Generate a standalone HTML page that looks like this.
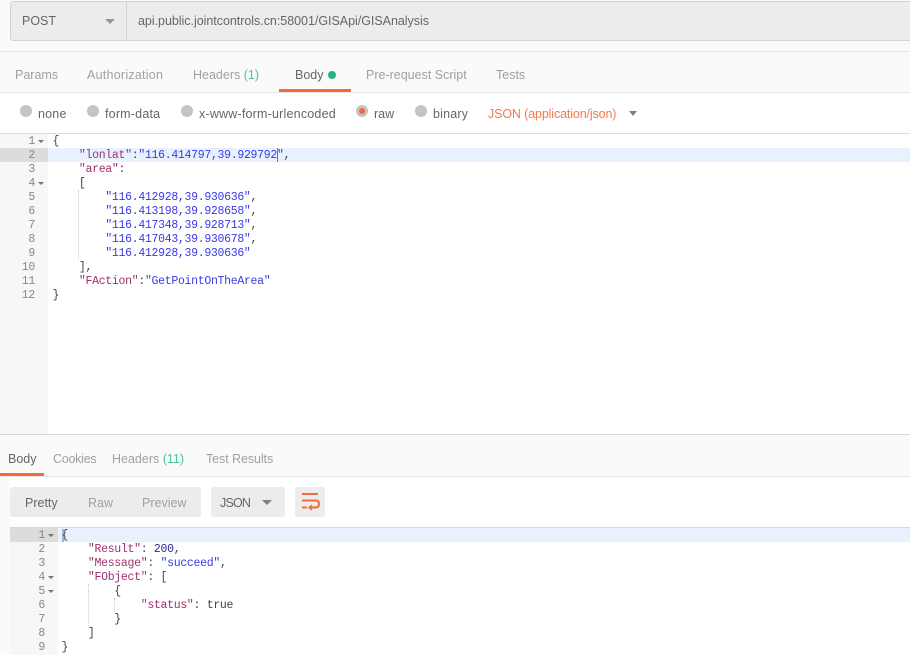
<!DOCTYPE html>
<html><head><meta charset="utf-8"><style>
html,body{margin:0;padding:0;background:#fff}
#p{position:relative;width:910px;height:655px;overflow:hidden;background:#fff;font-family:"Liberation Sans",sans-serif;font-size:12.5px;color:#a0a0a0}
.a{position:absolute}
.t{position:absolute;white-space:nowrap;line-height:16px}
.d{color:#666}.g{color:#4cc39a}
.r{position:absolute;width:12px;height:12px;border-radius:50%;background:#c4c4c4}
.c{position:absolute;white-space:pre;font-family:"Liberation Mono",monospace;font-size:11.5px;letter-spacing:-.3px;line-height:14px;color:#444}
.n{position:absolute;font-family:"Liberation Mono",monospace;font-size:11.5px;letter-spacing:-.3px;line-height:14px;color:#888;text-align:right;white-space:pre}
.k{color:#a0306f}.s{color:#3a3ae6}.b{color:#2a2a9c}
.ar{position:absolute;width:0;height:0;border-left:5px solid transparent;border-right:5px solid transparent;border-top:5px solid #808080}
.fa{position:absolute;width:0;height:0;border-left:3px solid transparent;border-right:3px solid transparent;border-top:3px solid #777}
.gd{position:absolute;width:0;border-left:1px dotted #ccc}
</style></head><body><div id="p">
<div class="a" style="left:0;top:0;width:910px;height:133px;background:#fafafa"></div>
<div class="a" style="left:10px;top:1px;width:900px;height:38px;background:#ececec;border:1px solid #d4d4d4;border-right:0;border-radius:3px 0 0 3px"></div>
<div class="a" style="left:126px;top:2px;width:1px;height:38px;background:#d4d4d4"></div>
<div class="t d" style="left:22px;top:13px;font-size:12.5px">POST</div>
<div class="ar" style="left:105px;top:19px;border-top-color:#999"></div>
<div class="t" style="left:138px;top:13px;color:#666;font-size:12.5px;letter-spacing:-.03px">api.public.jointcontrols.cn:58001/GISApi/GISAnalysis</div>
<div class="a" style="left:0;top:51px;width:910px;height:1px;background:#e8e8e8"></div>
<div class="a" style="left:0;top:92px;width:910px;height:1px;background:#e6e6e6"></div>
<div class="a" style="left:0;top:93px;width:910px;height:40px;background:#fff"></div>
<div class="t" style="left:15px;top:67px">Params</div>
<div class="t" style="left:87px;top:67px;letter-spacing:.25px">Authorization</div>
<div class="t" style="left:193px;top:67px">Headers <span class="g">(1)</span></div>
<div class="t d" style="left:295px;top:67px">Body</div>
<div class="a" style="left:328px;top:71px;width:8px;height:8px;border-radius:50%;background:#26b47f"></div>
<div class="a" style="left:279px;top:89px;width:72px;height:3px;background:#f26b3a"></div>
<div class="t" style="left:366px;top:67px">Pre-request Script</div>
<div class="t" style="left:496px;top:67px">Tests</div>
<div class="r" style="left:20px;top:105px"></div><div class="t d" style="left:38px;top:106px;letter-spacing:.2px">none</div>
<div class="r" style="left:87px;top:105px"></div><div class="t d" style="left:105px;top:106px;letter-spacing:.2px">form-data</div>
<div class="r" style="left:181px;top:105px"></div><div class="t d" style="left:199px;top:106px;letter-spacing:.2px">x-www-form-urlencoded</div>
<div class="r" style="left:356px;top:105px"></div><div class="a" style="left:359px;top:108px;width:6px;height:6px;border-radius:50%;background:#f26b3a"></div><div class="t d" style="left:374px;top:106px">raw</div>
<div class="r" style="left:415px;top:105px"></div><div class="t d" style="left:433px;top:106px;letter-spacing:.2px">binary</div>
<div class="t" style="left:488px;top:106px;color:#f4794a;letter-spacing:-.13px">JSON (application/json)</div>
<div class="ar" style="left:629px;top:111px;border-left-width:4.5px;border-right-width:4.5px"></div>

<div class="a" style="left:0;top:133px;width:910px;height:1px;background:#dcdcdc"></div>
<div class="a" style="left:0;top:134px;width:48px;height:300px;background:#f7f7f7"></div>
<div class="a" style="left:48px;top:148px;width:862px;height:14px;background:#e8f2ff"></div>
<div class="a" style="left:0;top:148px;width:48px;height:14px;background:#dcdcdc"></div>
<div class="n" style="left:0;top:135px;width:35px">1
2
3
4
5
6
7
8
9
10
11
12</div>
<div class="fa" style="left:38px;top:140px"></div><div class="fa" style="left:38px;top:182px"></div>
<div class="gd" style="left:78px;top:190px;height:70px"></div>
<div class="c" style="left:52.5px;top:135px">{
    <span class="k">"lonlat"</span>:<span class="s">"116.414797,39.929792"</span>,
    <span class="k">"area"</span>:
    [
        <span class="s">"116.412928,39.930636"</span>,
        <span class="s">"116.413198,39.928658"</span>,
        <span class="s">"116.417348,39.928713"</span>,
        <span class="s">"116.417043,39.930678"</span>,
        <span class="s">"116.412928,39.930636"</span>
    ],
    <span class="k">"FAction"</span>:<span class="s">"GetPointOnTheArea"</span>
}</div>
<div class="a" style="left:277px;top:148px;width:1px;height:14px;background:#777"></div>

<div class="a" style="left:0;top:434px;width:910px;height:1px;background:#d8d8d8"></div>
<div class="a" style="left:0;top:435px;width:910px;height:41px;background:#fafafa"></div>
<div class="a" style="left:0;top:476px;width:910px;height:1px;background:#e6e6e6"></div>
<div class="a" style="left:0;top:477px;width:10px;height:178px;background:#fafafa"></div>
<div class="t d" style="left:8px;top:451px">Body</div>
<div class="a" style="left:0;top:473px;width:44px;height:3px;background:#f26b3a"></div>
<div class="t" style="left:53px;top:451px;letter-spacing:-.25px">Cookies</div>
<div class="t" style="left:112px;top:451px">Headers <span class="g">(11)</span></div>
<div class="t" style="left:206px;top:451px;letter-spacing:-.08px">Test Results</div>
<div class="a" style="left:10px;top:487px;width:191px;height:30px;background:#ececec;border-radius:3px"></div>
<div class="t d" style="left:25px;top:495px">Pretty</div>
<div class="t" style="left:88px;top:495px">Raw</div>
<div class="t" style="left:142px;top:495px">Preview</div>
<div class="a" style="left:211px;top:487px;width:74px;height:30px;background:#ececec;border-radius:3px"></div>
<div class="t d" style="left:220px;top:495px;letter-spacing:-.8px">JSON</div>
<div class="ar" style="left:262px;top:500px"></div>
<div class="a" style="left:295px;top:487px;width:30px;height:30px;background:#ececec;border-radius:3px"></div>
<svg class="a" style="left:295px;top:487px" width="30" height="30" fill="none" stroke="#f26b3a" stroke-width="2"><path d="M7 7H23M7 13.5H20.5Q24 13.5 24 17T20.5 20.5H14.5M7 20.5H12"/><path d="M17 18L14 20.5L17 23" stroke-width="1.4"/></svg>

<div class="a" style="left:10px;top:527px;width:900px;height:1px;background:#d8d8d8"></div>
<div class="a" style="left:10px;top:528px;width:48px;height:127px;background:#f7f7f7"></div>
<div class="a" style="left:58px;top:528px;width:852px;height:14px;background:#e8f2ff"></div>
<div class="a" style="left:10px;top:528px;width:48px;height:14px;background:#dcdcdc"></div>
<div class="n" style="left:10px;top:529px;width:35px">1
2
3
4
5
6
7
8
9</div>
<div class="fa" style="left:48px;top:534px"></div><div class="fa" style="left:48px;top:576px"></div><div class="fa" style="left:48px;top:590px"></div>
<div class="gd" style="left:88px;top:584px;height:42px"></div>
<div class="gd" style="left:114px;top:598px;height:14px"></div>
<div class="a" style="left:62px;top:529px;width:2px;height:13px;background:#9fb4cc"></div>
<div class="c" style="left:61.5px;top:529px">{
    <span class="k">"Result"</span>: <span class="b">200</span>,
    <span class="k">"Message"</span>: <span class="s">"succeed"</span>,
    <span class="k">"FObject"</span>: [
        {
            <span class="k">"status"</span>: true
        }
    ]
}</div>
</div></body></html>
